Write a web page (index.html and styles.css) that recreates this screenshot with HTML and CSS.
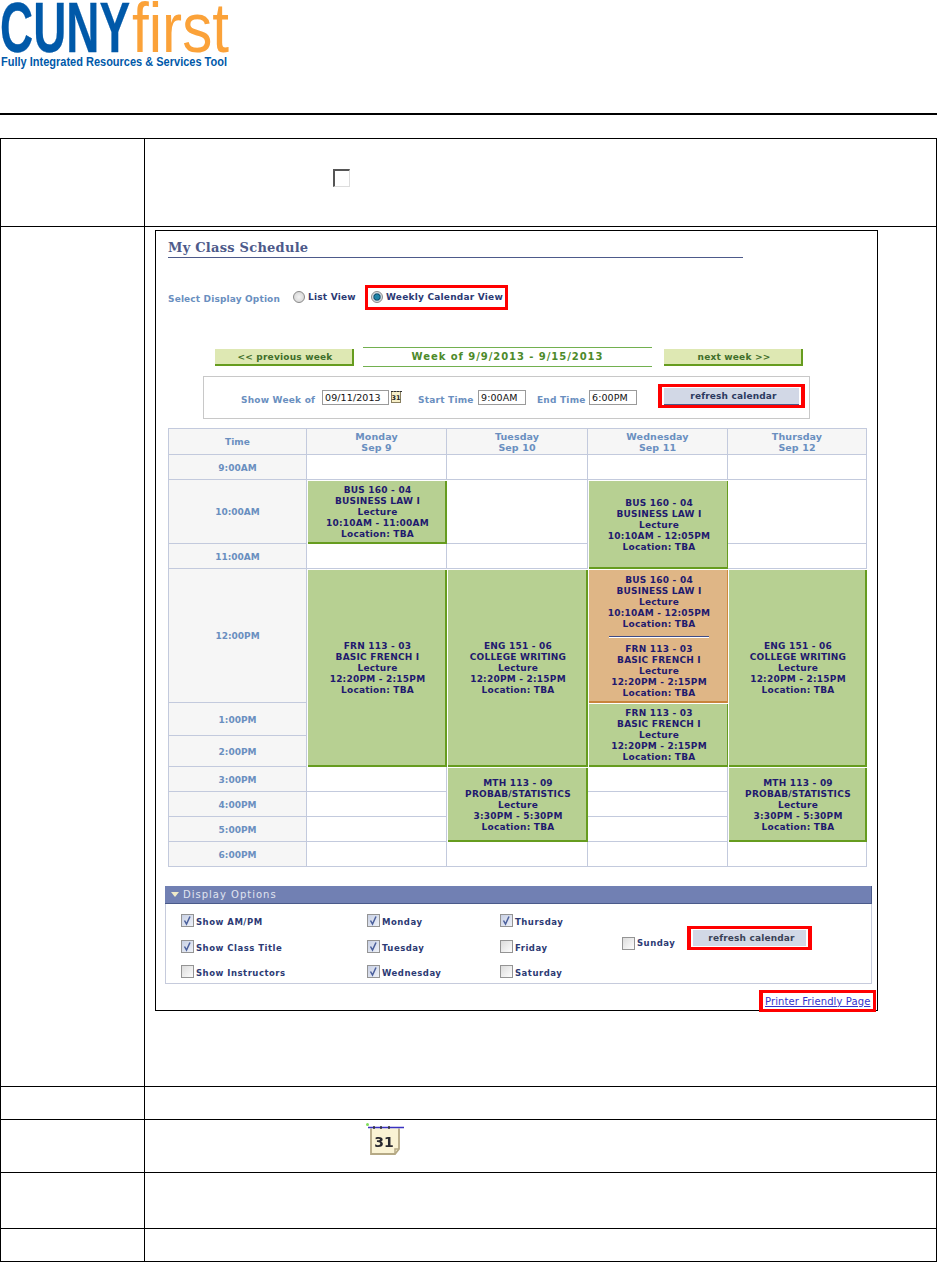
FILE: index.html
```
<!DOCTYPE html>
<html lang="en">
<head>
<meta charset="utf-8">
<title>CUNYfirst - My Class Schedule</title>
<link rel="stylesheet" href="styles.css">
</head>
<body>
<header class="logo-band">
  <svg class="logo" width="232" height="72" viewBox="0 0 232 72">
    <text class="logo-cuny" x="0" y="52" textLength="130" lengthAdjust="spacingAndGlyphs">CUNY</text>
    <text class="logo-first" x="132" y="52" textLength="97" lengthAdjust="spacingAndGlyphs">first</text>
    <text class="logo-sub" x="1" y="66" textLength="226" lengthAdjust="spacingAndGlyphs">Fully Integrated Resources &amp; Services Tool</text>
  </svg>
</header>
<div class="rule"></div>

<main class="doc">
  <div class="doc-cell"></div>
  <div class="doc-cell cell-box">
    <span class="big-check"></span>
  </div>

  <div class="doc-cell"></div>
  <div class="doc-cell cell-window">
    <section class="window">
      <h1 class="title">My Class Schedule</h1>

      <div class="options">
        <span class="opt-label">Select Display Option</span>
        <span class="radio"></span>
        <span class="opt-text">List View</span>
        <span class="red red-view">
          <span class="radio radio-on"></span>
          <span class="opt-text">Weekly Calendar View</span>
        </span>
      </div>

      <div class="week-nav">
        <span class="nav-btn">&lt;&lt; previous week</span>
        <span class="week-label">Week of 9/9/2013 - 9/15/2013</span>
        <span class="nav-btn">next week &gt;&gt;</span>
      </div>

      <div class="filters">
        <span class="f-label f-week">Show Week of</span>
        <span class="field field-date">09/11/2013</span>
        <svg class="cal-small" width="11" height="14" viewBox="0 0 11 14">
          <rect x="0.5" y="1.5" width="9" height="11" fill="#f7efc8" stroke="#8a8060"/>
          <path d="M0 1.5h11" stroke="#333" stroke-dasharray="2 1"/>
          <text class="cal-small-num" x="5" y="9.5" text-anchor="middle">31</text>
        </svg>
        <span class="f-label f-start">Start Time</span>
        <span class="field field-time">9:00AM</span>
        <span class="f-label f-end">End Time</span>
        <span class="field field-time">6:00PM</span>
        <span class="red red-top"><span class="refresh">refresh calendar</span></span>
      </div>

      <div class="calendar">
        <div class="head time-head">Time</div>
        <div class="head">Monday<br>Sep 9</div>
        <div class="head">Tuesday<br>Sep 10</div>
        <div class="head">Wednesday<br>Sep 11</div>
        <div class="head">Thursday<br>Sep 12</div>

        <div class="time">9:00AM</div>
        <div class="empty"></div><div class="empty"></div><div class="empty"></div><div class="empty"></div>

        <div class="time">10:00AM</div>
        <div class="slot"><div class="ev">BUS 160 - 04<br>BUSINESS LAW I<br>Lecture<br>10:10AM - 11:00AM<br>Location: TBA</div></div>
        <div class="empty"></div>
        <div class="slot span2"><div class="ev ev-thin">BUS 160 - 04<br>BUSINESS LAW I<br>Lecture<br>10:10AM - 12:05PM<br>Location: TBA</div></div>
        <div class="empty"></div>

        <div class="time">11:00AM</div>
        <div class="empty"></div><div class="empty"></div><div class="empty"></div>

        <div class="time">12:00PM</div>
        <div class="slot span3"><div class="ev">FRN 113 - 03<br>BASIC FRENCH I<br>Lecture<br>12:20PM - 2:15PM<br>Location: TBA</div></div>
        <div class="slot span3"><div class="ev">ENG 151 - 06<br>COLLEGE WRITING<br>Lecture<br>12:20PM - 2:15PM<br>Location: TBA</div></div>
        <div class="slot"><div class="ev ev-conflict">
          <div>BUS 160 - 04<br>BUSINESS LAW I<br>Lecture<br>10:10AM - 12:05PM<br>Location: TBA</div>
          <hr class="sep">
          <div>FRN 113 - 03<br>BASIC FRENCH I<br>Lecture<br>12:20PM - 2:15PM<br>Location: TBA</div>
        </div></div>
        <div class="slot span3"><div class="ev">ENG 151 - 06<br>COLLEGE WRITING<br>Lecture<br>12:20PM - 2:15PM<br>Location: TBA</div></div>

        <div class="time">1:00PM</div>
        <div class="slot span2"><div class="ev ev-thin">FRN 113 - 03<br>BASIC FRENCH I<br>Lecture<br>12:20PM - 2:15PM<br>Location: TBA</div></div>

        <div class="time">2:00PM</div>

        <div class="time">3:00PM</div>
        <div class="empty"></div>
        <div class="slot span3"><div class="ev">MTH 113 - 09<br>PROBAB/STATISTICS<br>Lecture<br>3:30PM - 5:30PM<br>Location: TBA</div></div>
        <div class="empty"></div>
        <div class="slot span3"><div class="ev">MTH 113 - 09<br>PROBAB/STATISTICS<br>Lecture<br>3:30PM - 5:30PM<br>Location: TBA</div></div>

        <div class="time">4:00PM</div>
        <div class="empty"></div><div class="empty"></div>

        <div class="time">5:00PM</div>
        <div class="empty"></div><div class="empty"></div>

        <div class="time">6:00PM</div>
        <div class="empty"></div><div class="empty"></div><div class="empty"></div><div class="empty"></div>
      </div>

      <section class="display">
        <h2 class="display-head"><span class="tri"></span>Display Options</h2>
        <div class="display-body">
          <label class="chk"><span class="cb on"><svg width="11" height="11" viewBox="0 0 11 11"><path d="M2.5 5.5 4.5 9 8 1.5" /></svg></span>Show AM/PM</label>
          <label class="chk"><span class="cb on"><svg width="11" height="11" viewBox="0 0 11 11"><path d="M2.5 5.5 4.5 9 8 1.5" /></svg></span>Monday</label>
          <label class="chk"><span class="cb on"><svg width="11" height="11" viewBox="0 0 11 11"><path d="M2.5 5.5 4.5 9 8 1.5" /></svg></span>Thursday</label>
          <div class="display-side">
            <label class="chk"><span class="cb"></span>Sunday</label>
            <span class="red red-bottom"><span class="refresh refresh-flat">refresh calendar</span></span>
          </div>
          <label class="chk"><span class="cb on"><svg width="11" height="11" viewBox="0 0 11 11"><path d="M2.5 5.5 4.5 9 8 1.5" /></svg></span>Show Class Title</label>
          <label class="chk"><span class="cb on"><svg width="11" height="11" viewBox="0 0 11 11"><path d="M2.5 5.5 4.5 9 8 1.5" /></svg></span>Tuesday</label>
          <label class="chk"><span class="cb"></span>Friday</label>
          <label class="chk"><span class="cb"></span>Show Instructors</label>
          <label class="chk"><span class="cb on"><svg width="11" height="11" viewBox="0 0 11 11"><path d="M2.5 5.5 4.5 9 8 1.5" /></svg></span>Wednesday</label>
          <label class="chk"><span class="cb"></span>Saturday</label>
        </div>
      </section>

      <div class="print-row"><span class="red red-print"><a class="print-link" href="#">Printer Friendly Page</a></span></div>
    </section>
  </div>

  <div class="doc-cell"></div>
  <div class="doc-cell"></div>

  <div class="doc-cell"></div>
  <div class="doc-cell cell-cal">
    <svg class="cal-big" width="38" height="34" viewBox="0 0 38 34">
      <circle cx="1.5" cy="1.5" r="1.5" fill="#7fdc5a"/>
      <path d="M5 5.500V31h24l4-5V5.500" fill="#faf3d4" stroke="#b5a985" stroke-width="1.800"/>
      <path d="M2 4.500h36" stroke="#3a32c0" stroke-width="1.500"/>
      <path d="M8 3v3M15 3v3M23 3v3" stroke="#333" stroke-width="1.500"/>
      <path d="M29 31v-5h4" fill="none" stroke="#b5a985" stroke-width="1.500"/>
      <text class="cal-big-num" x="18" y="24" text-anchor="middle">31</text>
    </svg>
  </div>

  <div class="doc-cell"></div>
  <div class="doc-cell"></div>

  <div class="doc-cell"></div>
  <div class="doc-cell"></div>
</main>
</body>
</html>
```
FILE: styles.css
```
* { box-sizing: border-box; }
html, body { margin: 0; background: #fff; }
body { font-family: "DejaVu Sans", sans-serif; overflow: hidden; }

.logo-band { height: 113px; }
.logo { display: block; }
.logo-cuny { font: bold 70px "Liberation Sans", sans-serif; fill: #0059a9; stroke: #0059a9; stroke-width: 0.3px; }
.logo-first { font: 70px "Liberation Sans", sans-serif; fill: #fba239; }
.logo-sub { font: bold 13.500px "Liberation Sans", sans-serif; fill: #0059a9; }

.rule { height: 2px; width: 937px; background: #000; }

.doc {
  margin-top: 23px;
  display: grid;
  grid-template-columns: 143px 791px;
  grid-template-rows: 87px 859px 32px 52px 55px 32px;
  gap: 1px;
  padding: 1px;
  width: 937px;
  background: #000;
}
.doc-cell { background: #fff; min-width: 0; }
.cell-box { padding: 30px 0 0 188px; }
.big-check {
  display: block;
  width: 17px;
  height: 18px;
  border-top: 2px solid #555;
  border-left: 2px solid #555;
  border-right: 1px solid #ddd;
  border-bottom: 1px solid #ddd;
  filter: blur(0.4px);
}
.cell-window { padding: 3px 0 0 10px; }
.cell-cal { padding: 3px 0 0 221px; }
.cal-big { display: block; filter: blur(0.5px); }
.cal-big-num { font: bold 14px "DejaVu Sans", sans-serif; fill: #2a2a30; }

.window {
  width: 723px;
  height: 781px;
  border: 1px solid #000;
  padding: 0 0 0 12px;
  background: #fff;
}
.title {
  margin: 0;
  width: 575px;
  height: 27px;
  padding-top: 9px;
  border-bottom: 1px solid #4d5a8a;
  font: bold 13px/16px "DejaVu Serif", serif;
  letter-spacing: 0.25px;
  color: #4d5a8a;
}

.options {
  margin-top: 27px;
  height: 25px;
  display: flex;
  align-items: center;
  font-size: 9px;
  font-weight: bold;
}
.opt-label { width: 125px; color: #6a8fc0; margin-top: 2px; letter-spacing: 0.15px; white-space: nowrap; }
.opt-text { color: #2c3a74; letter-spacing: 0.22px; margin-top: -2px; white-space: nowrap; }
.radio {
  width: 12px;
  height: 12px;
  margin-right: 3px;
  margin-top: -2px;
  flex: none;
  border-radius: 50%;
  border: 1px solid #8a8a8a;
  background: radial-gradient(circle at 50% 50%, #f2f2f2, #cfcfcf);
}
.radio-on {
  margin-right: 3px;
  background: radial-gradient(circle at 50% 50%, #1f84a8 0 32%, #0d4f70 42%, #d8dde2 62%);
}
.options > .opt-text { width: 57px; }
.red { display: flex; align-items: center; border: 3px solid #f00; background: #fff; }
.red-view { width: 143px; height: 25px; padding-left: 3px; }

.week-nav {
  margin: 37px 0 0 47px;
  display: flex;
  align-items: center;
  height: 20px;
}
.nav-btn {
  width: 139px;
  height: 17px;
  padding-left: 3px;
  background: #dee8b3;
  border-right: 2px solid #669c1f;
  border-bottom: 2px solid #669c1f;
  font-size: 9px;
  font-weight: bold;
  letter-spacing: 0.2px;
  line-height: 17px;
  text-align: center;
  color: #3f6e2a;
}
.week-label {
  width: 289px;
  height: 20px;
  margin: 0 12px 0 9px;
  border-top: 1px solid #72b04f;
  border-bottom: 1px solid #72b04f;
  font-size: 10px;
  font-weight: bold;
  letter-spacing: 0.95px;
  line-height: 17px;
  text-align: center;
  color: #4d8a2a;
}

.filters {
  margin: 9px 0 0 35px;
  width: 607px;
  height: 43px;
  border: 1px solid #c8c8c8;
  display: flex;
  align-items: center;
  font-size: 9px;
  font-weight: bold;
}
.f-label { color: #6a8fc0; margin-top: 5px; letter-spacing: 0.22px; white-space: nowrap; }
.f-week { width: 81px; margin-left: 37px; }
.f-start { width: 60px; margin-left: 16px; }
.f-end { width: 52px; margin-left: 11px; }
.field {
  height: 15px;
  border: 1px solid #9a9a9a;
  padding-left: 2px;
  font-size: 9.500px;
  font-weight: normal;
  letter-spacing: 0.1px;
  line-height: 13px;
  color: #111;
  background: #fff;
}
.field-date { width: 67px; }
.field-time { width: 48px; }
.cal-small { margin-left: 2px; margin-top: -2px; flex: none; }
.cal-small-num { font: bold 6.500px "DejaVu Sans", sans-serif; fill: #222; }
.red-top { width: 147px; height: 24px; margin-left: 21px; margin-top: -4px; border-width: 3px 4px; }
.refresh {
  flex: 1;
  height: 17px;
  margin: 1px 2px 0;
  padding-left: 4px;
  background: #d2d8e6;
  border-bottom: 1px solid #4d5a8a;
  font-size: 9px;
  font-weight: bold;
  letter-spacing: 0.15px;
  line-height: 16px;
  text-align: center;
  color: #2c3a60;
}
.refresh-flat { height: 16px; margin: 0 2px; border: 0; color: #3a4256; line-height: 17px; }

.calendar {
  margin-top: 9px;
  width: 699px;
  display: grid;
  grid-template-columns: 137px 139px 140px 139px 138px;
  grid-template-rows: 25px 24px 63px 24px 133px 32px 30px 24px 24px 24px 24px;
  gap: 1px;
  padding: 1px;
  background: #c3cadd;
  font-size: 9px;
  font-weight: bold;
  line-height: 11px;
  text-align: center;
}
.head, .time {
  background: #f6f6f6;
  color: #6a8fc0;
  display: flex;
  align-items: center;
  justify-content: center;
}
.time { padding-top: 2px; }
.head { font-size: 9.500px; letter-spacing: 0.1px; }
.time-head { font-size: 9px; color: #6a8fc0; padding-top: 2px; }
.empty { background: #fff; }
.slot {
  background: #fff;
  padding: 1px 0 0 1px;
  margin: 0 -1px -1px 0;
  display: flex;
  position: relative;
}
.span2 { grid-row: span 2; }
.span3 { grid-row: span 3; }
.ev {
  flex: 1;
  min-width: 0;
  padding: 2px 0 0 2px;
  background: #b7d092;
  border-right: 2px solid #669c1f;
  border-bottom: 2px solid #669c1f;
  color: #1f1a6e;
  letter-spacing: 0.22px;
  display: flex;
  flex-direction: column;
  justify-content: center;
}
.ev-thin { border-right-width: 1px; }
.ev-conflict {
  background: #dfb686;
  border-right: 1px solid #d08a3c;
  border-bottom: 2px solid #c8843c;
}
.sep {
  width: 100px;
  height: 2px;
  margin: 6px auto;
  border: 0;
  border-top: 1px solid #3f4b86;
  border-bottom: 1px solid #fff;
}

.display {
  margin: 19px 0 0 -3px;
  width: 707px;
  height: 98px;
  border: 1px solid #c6cbdc;
}
.display-head {
  margin: -1px -1px 0 -1px;
  height: 18px;
  display: flex;
  align-items: center;
  background: #7180b3;
  border-bottom: 1px solid #4a5a8a;
  border-right: 1px solid #4a5a8a;
  font-size: 10px;
  font-weight: normal;
  letter-spacing: 1px;
  color: #e0e4f0;
}
.tri {
  margin: 0 4px 0 6px;
  width: 0;
  height: 0;
  border: 4px solid transparent;
  border-top: 5px solid #efe9c8;
  border-bottom: 0;
}
.display-body {
  padding: 10px 0 0 15px;
  display: grid;
  grid-template-columns: 186px 133px 122px 1fr;
  grid-template-rows: 26px 25px 16px;
  font-size: 8.500px;
  font-weight: bold;
  letter-spacing: 0.5px;
  color: #2c3a74;
}
.chk { display: flex; align-items: flex-start; line-height: 17px; white-space: nowrap; }
.cb {
  flex: none;
  width: 13px;
  height: 13px;
  margin-right: 2px;
  border: 1px solid #949494;
  background: linear-gradient(135deg, #dcdcdc, #fdfdfd);
  display: flex;
}
.cb.on { background: linear-gradient(135deg, #c8d0e4, #eef1f8); }
.cb svg path { fill: none; stroke: #4a5f9c; stroke-width: 1.500; }
.display-side {
  grid-column: 4;
  grid-row: 1 / span 3;
  align-self: start;
  margin-top: 12px;
  display: flex;
  align-items: flex-end;
  height: 24px;
}
.red-bottom { width: 125px; height: 24px; margin-left: 11px; border-width: 3px 4px; }
.display-side .chk { width: 54px; height: 14px; align-items: center; }

.print-row {
  margin-top: 6px;
  width: 708px;
  display: flex;
  justify-content: flex-end;
  position: relative;
  z-index: 1;
}
.red-print {
  width: 117px;
  height: 22px;
  border-width: 3px 3px 3px 4px;
  padding-left: 2px;
}
.print-link {
  font-size: 10px;
  letter-spacing: 0.1px;
  color: #3333cc;
  white-space: nowrap;
}
```
